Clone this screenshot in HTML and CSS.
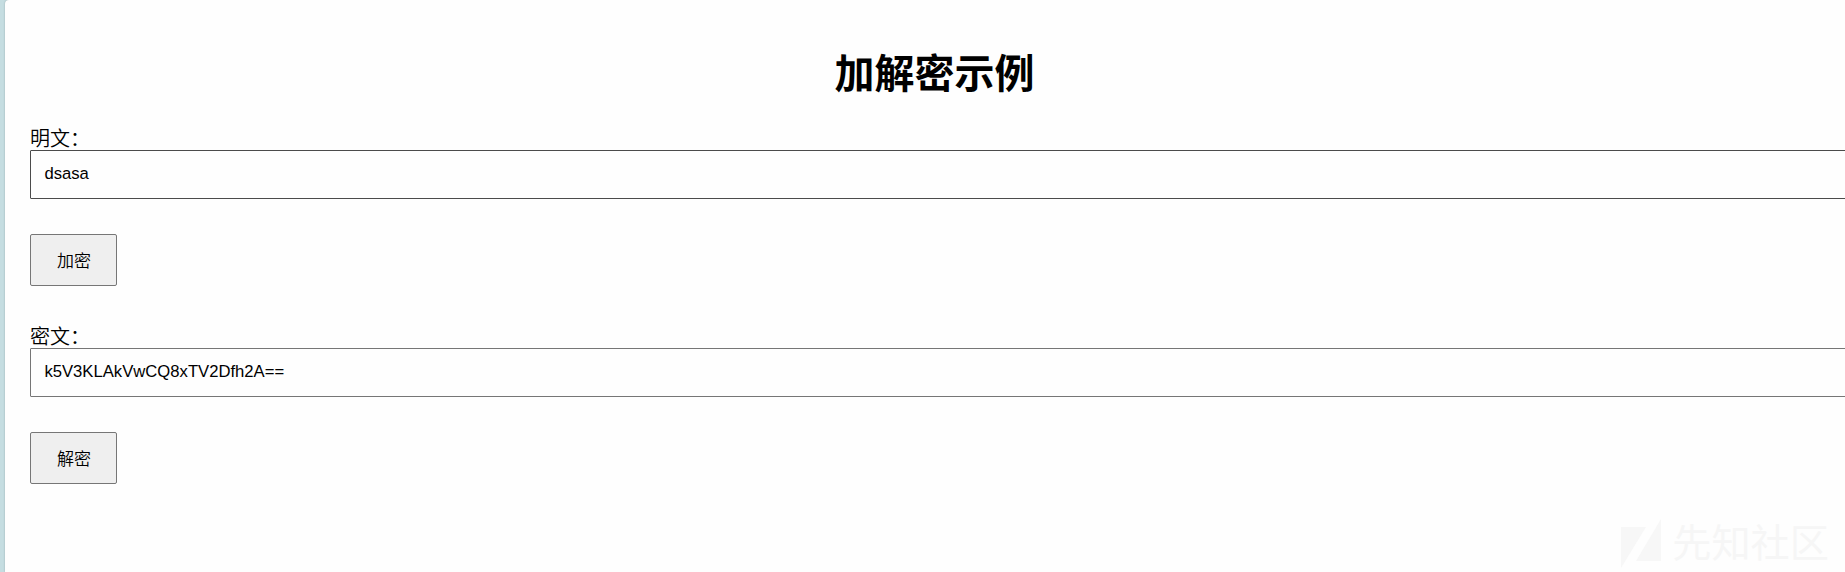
FILE: index.html
```html
<!DOCTYPE html>
<html lang="zh-CN">
<head>
<meta charset="utf-8">
<title>加解密示例</title>
<link rel="stylesheet" href="styles.css">
</head>
<body>
<main class="panel">
  <h1 class="title">加解密示例</h1>
  <section class="group">
    <label class="label" for="plain">明文：</label>
    <input class="field field-active" id="plain" type="text" value="dsasa">
    <button class="button" type="button">加密</button>
  </section>
  <section class="group">
    <label class="label" for="cipher">密文：</label>
    <input class="field" id="cipher" type="text" value="k5V3KLAkVwCQ8xTV2Dfh2A==">
    <button class="button" type="button">解密</button>
  </section>
</main>
<div class="watermark">
  <svg class="mark" width="40" height="50" viewBox="0 0 40 50"><path d="M0 8H25L0 49ZM40 0V42H15Z" fill="#f7f7f7"/></svg>
  <span>先知社区</span>
</div>
</body>
</html>
```
FILE: styles.css
```css
* {
  box-sizing: border-box;
}

body {
  margin: 0;
  height: 572px;
  overflow: hidden;
  background: #c5dde1;
  padding-left: 5px;
  font-family: "Liberation Sans", "Noto Sans CJK SC", sans-serif;
  color: #000;
}

.panel {
  height: 572px;
  background: #fefefe;
  border-top-left-radius: 4px;
  box-shadow: 0 0 2px rgba(0, 0, 0, 0.25);
  padding: 44px 0 0 25px;
  overflow: hidden;
}

.title {
  margin: 0 0 21px;
  width: 1809px;
  height: 60px;
  font-size: 40px;
  line-height: 60px;
  text-align: center;
}

.group {
  display: flex;
  flex-direction: column;
  align-items: flex-start;
  margin-bottom: 37px;
}

.label {
  height: 25px;
  font-size: 20px;
  line-height: 28px;
  font-weight: 350;
}

.field {
  width: 1850px;
  height: 49px;
  margin: 0 0 35px;
  padding: 0 13px 1px 13.4px;
  border: 1px solid #767676;
  border-radius: 1px;
  background: #fefefe;
  color: #000;
  font: 16.67px "Liberation Sans", sans-serif;
  outline: none;
}

.field-active {
  border-color: #4b4b4b;
}

.button {
  width: 87px;
  height: 52px;
  padding: 0 0 1px 1px;
  border: 1px solid #767676;
  border-radius: 2px;
  background: #efefef;
  color: #000;
  font: 350 17px "Noto Sans CJK SC", sans-serif;
}

.watermark {
  position: absolute;
  right: 16px;
  bottom: 3px;
  display: flex;
  align-items: center;
  gap: 11px;
  color: #f6f6f6;
  font-size: 39.2px;
  font-weight: 400;
  line-height: 50px;
}

.mark {
  display: block;
}
```
